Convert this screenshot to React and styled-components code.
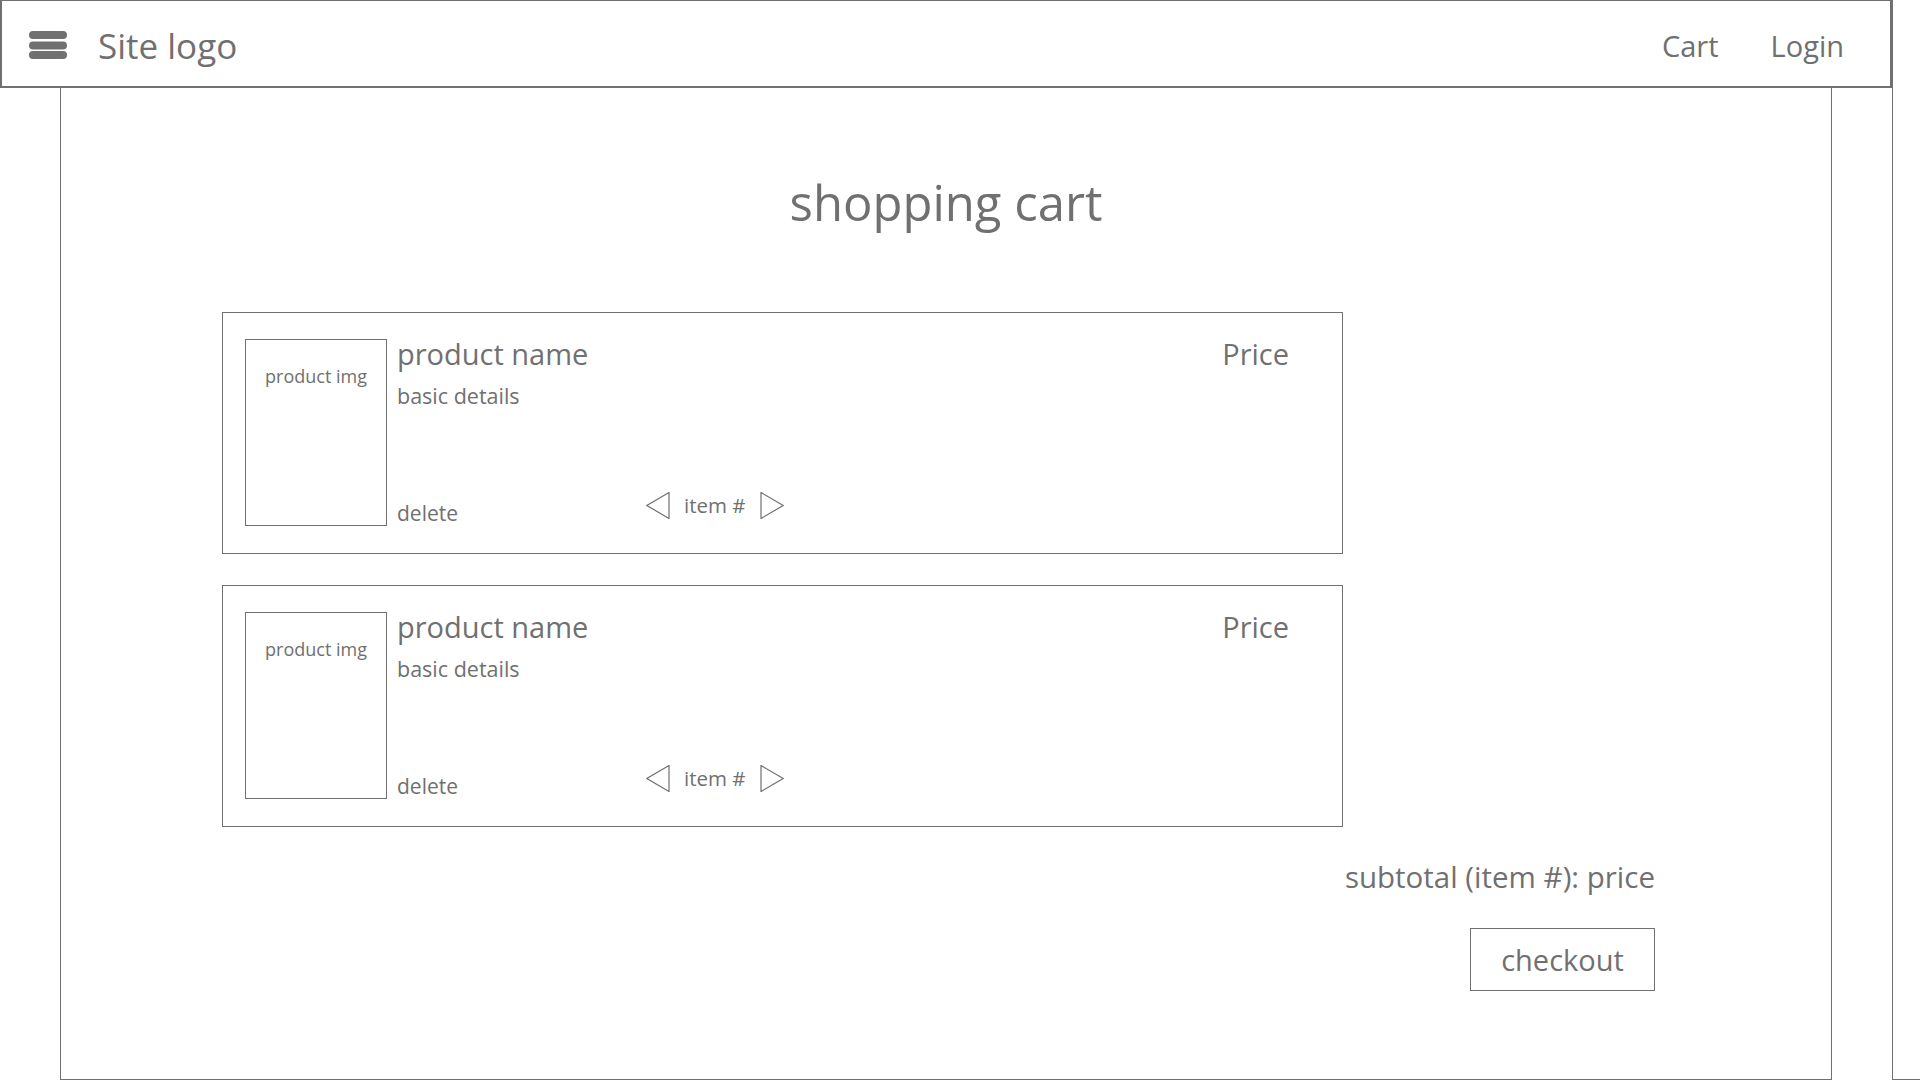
import styled, { createGlobalStyle } from "styled-components";

const ink = "#707070";

const GlobalStyle = createGlobalStyle`
  html, body {
    margin: 0;
    padding: 0;
    background: #ffffff;
    overflow: hidden;
  }
  body {
    font-family: "Open Sans", "Noto Sans", sans-serif;
    color: ${ink};
  }
  * { box-sizing: border-box; }
`;

const items = [
  { id: 1, name: "product name", details: "basic details", price: "Price" },
  { id: 2, name: "product name", details: "basic details", price: "Price" },
];

export default function App() {
  return (
    <>
      <GlobalStyle />
      <Page>
        <Column>
          <Header>
            <Brand>
              <Burger viewBox="0 0 38 28">
                <rect x="0" y="0" width="38" height="8" rx="4" />
                <rect x="0" y="10.5" width="38" height="8" rx="4" />
                <rect x="0" y="20" width="38" height="8" rx="4" />
              </Burger>
              <Logo>Site logo</Logo>
            </Brand>
            <Nav>
              <NavLink>Cart</NavLink>
              <NavLink>Login</NavLink>
            </Nav>
          </Header>
          <Main>
            <Title>shopping cart</Title>
            <Content>
              <CardList>
                {items.map((item) => (
                  <Card key={item.id}>
                    <ImageBox>product img</ImageBox>
                    <Info>
                      <TopRow>
                        <div>
                          <Name>{item.name}</Name>
                          <Details>{item.details}</Details>
                        </div>
                        <Price>{item.price}</Price>
                      </TopRow>
                      <BottomRow>
                        <Delete>delete</Delete>
                        <Qty>
                          <Arrow viewBox="0 0 24 27">
                            <polygon points="23,0.5 23,26.5 0.8,13.5" />
                          </Arrow>
                          <QtyLabel>item #</QtyLabel>
                          <Arrow viewBox="0 0 24 27">
                            <polygon points="1,0.5 1,26.5 23.2,13.5" />
                          </Arrow>
                        </Qty>
                      </BottomRow>
                    </Info>
                  </Card>
                ))}
              </CardList>
              <Summary>
                <Subtotal>subtotal (item #): price</Subtotal>
                <CheckoutButton>checkout</CheckoutButton>
              </Summary>
            </Content>
          </Main>
        </Column>
        <SideStub />
      </Page>
    </>
  );
}

const Page = styled.div`
  display: flex;
  width: 1920px;
  height: 1080px;
`;

const Column = styled.div`
  width: 1892px;
  flex-shrink: 0;
  display: flex;
  flex-direction: column;
`;

const SideStub = styled.div`
  flex: 1;
  height: 1080px;
  border-left: 1px solid ${ink};
  border-bottom: 1px solid ${ink};
`;

const Header = styled.header`
  height: 88px;
  border: 2px solid ${ink};
  border-top-width: 1px;
  display: flex;
  align-items: center;
  justify-content: space-between;
  padding: 4px 46px 0 27px;
`;

const Brand = styled.div`
  display: flex;
  align-items: center;
  gap: 31px;
`;

const Burger = styled.svg`
  width: 38px;
  height: 28px;
  fill: ${ink};
  margin-top: -2px;
`;

const Logo = styled.span`
  font-size: 35px;
  line-height: 1;
`;

const Nav = styled.nav`
  display: flex;
  gap: 52px;
`;

const NavLink = styled.span`
  font-size: 29px;
  line-height: 1;
`;

const Main = styled.main`
  margin-left: 60px;
  width: 1772px;
  height: 992px;
  border: 1px solid ${ink};
  border-top: none;
  display: flex;
  flex-direction: column;
`;

const Title = styled.h1`
  margin: 84px 0 0;
  font-weight: 400;
  font-size: 49px;
  line-height: 60px;
  text-align: center;
`;

const Content = styled.div`
  margin-top: 80px;
  padding: 0 176px 0 161px;
  display: flex;
  flex-direction: column;
`;

const CardList = styled.div`
  display: flex;
  flex-direction: column;
  gap: 31px;
`;

const Card = styled.div`
  width: 1121px;
  height: 242px;
  border: 1px solid ${ink};
  padding: 26px 0 0 22px;
  display: flex;
  gap: 10px;
`;

const ImageBox = styled.div`
  width: 142px;
  height: 187px;
  border: 1px solid ${ink};
  font-size: 18px;
  text-align: center;
  padding-top: 24px;
  line-height: 24px;
`;

const Info = styled.div`
  flex: 1;
  height: 187px;
  display: flex;
  flex-direction: column;
  justify-content: space-between;
  padding-right: 53px;
`;

const TopRow = styled.div`
  display: flex;
  justify-content: space-between;
  align-items: flex-start;
`;

const Name = styled.div`
  font-size: 29px;
  line-height: 40px;
  margin-top: -5px;
`;

const Details = styled.div`
  font-size: 21.5px;
  line-height: 28px;
  margin-top: 8px;
`;

const Price = styled.div`
  font-size: 29px;
  line-height: 40px;
  margin-top: -5px;
`;

const BottomRow = styled.div`
  display: grid;
  grid-template-columns: 249px auto;
  align-items: center;
  justify-content: start;
  padding-bottom: 3px;
`;

const Delete = styled.span`
  font-size: 21px;
  line-height: 28px;
  padding-top: 12px;
  margin-bottom: -4px;
`;

const Qty = styled.div`
  display: flex;
  align-items: center;
  gap: 14px;
`;

const Arrow = styled.svg`
  width: 24px;
  height: 27px;
  fill: none;
  stroke: ${ink};
  stroke-width: 1.2;
`;

const QtyLabel = styled.span`
  font-size: 20.5px;
  line-height: 28px;
`;

const Summary = styled.div`
  display: flex;
  flex-direction: column;
  align-items: flex-end;
  margin-top: 30px;
`;

const Subtotal = styled.div`
  font-size: 29.5px;
  line-height: 40px;
`;

const CheckoutButton = styled.button`
  margin-top: 31px;
  width: 185px;
  height: 63px;
  border: 1px solid ${ink};
  background: #ffffff;
  color: ${ink};
  font-family: "Open Sans", "Noto Sans", sans-serif;
  font-size: 29px;
  padding: 0;
`;
